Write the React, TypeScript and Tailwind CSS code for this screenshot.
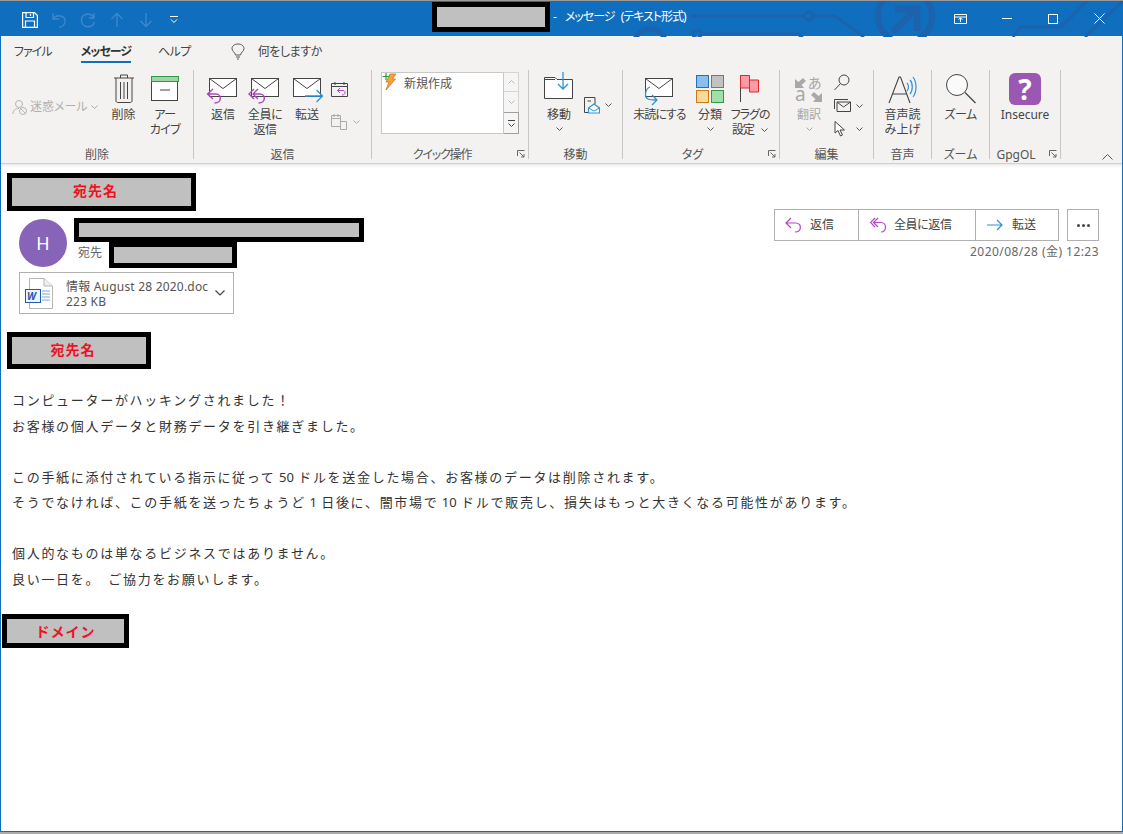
import type { ReactNode } from "react";

const ink = "#444444";
const purple = "#b146c2";
const blue = "#2b94d8";

const Envelope = ({ x = 0, y = 0 }: { x?: number; y?: number }) => (
  <g transform={`translate(${x} ${y})`} fill="none" stroke={ink}>
    <rect x="0.5" y="0.5" width="27" height="18" fill="#fff" />
    <path d="M0.5 0.5 14 10.5 27.5 0.5" />
  </g>
);

const Redact = ({ className, children }: { className: string; children?: ReactNode }) => (
  <div className={`border-[5px] border-black bg-[#c0c0c0] flex items-center justify-center text-[14px] font-bold text-[#f01020] tracking-[1px] [font-feature-settings:normal] ${className}`}>
    {children}
  </div>
);

const Chevron = ({ className = "", color = "#555" }: { className?: string; color?: string }) => (
  <svg width="7" height="4" viewBox="0 0 7 4" className={`inline-block ${className}`} fill="none" stroke={color}>
    <path d="M0.5 0.5 3.5 3.5 6.5 0.5" />
  </svg>
);

const Launcher = () => (
  <svg width="8" height="8" viewBox="0 0 8 8" fill="none" stroke="#666" className="absolute right-[3px] bottom-[1px]">
    <path d="M0.5 6V0.5H7.500M2.500 2.500 7 7M7 4V7H4" />
  </svg>
);

const Group = ({ width, label, launcher, labelClass = "", children }: { width: number; label: string; launcher?: boolean; labelClass?: string; children: ReactNode }) => (
  <div className="relative h-[89px] shrink-0 flex flex-col border-r border-[#c6c6c6]" style={{ width }}>
    <div className="flex h-[78px] shrink-0">{children}</div>
    <div className={`shrink-0 text-center text-[12px] leading-[14px] text-[#555] ${labelClass}`}>{label}</div>
    {launcher && <Launcher />}
  </div>
);

const Big = ({ width, icon, lines, muted, chevron, tight = "" }: { width: number; icon: ReactNode; lines: ReactNode[]; muted?: boolean; chevron?: boolean; tight?: string }) => (
  <div className={`flex flex-col items-center shrink-0 text-[12px] leading-[15px] ${muted ? "text-[#a8a8a8]" : "text-[#444]"} ${tight}`} style={{ width }}>
    <div className="h-[37px] flex items-center justify-center">{icon}</div>
    {lines.map((l, i) => (
      <div key={i} className="whitespace-nowrap">{l}</div>
    ))}
    {chevron && <Chevron className="mt-[5px]" color={muted ? "#aaa" : "#555"} />}
  </div>
);

const TitleDeco = () => (
  <svg width="1123" height="36" viewBox="0 0 1123 36" fill="none" stroke="#1c62ac" strokeWidth="3" className="absolute left-0 top-0">
    <path d="M690 15H805M813 15H835L864 36M701 33H797L803 36M1013 36 1020 26H1061L1087 0M1085 36 1123 0" />
    <circle cx="809" cy="15" r="4" />
    <circle cx="697" cy="33" r="4" />
    <circle cx="650" cy="44" r="16" strokeWidth="5" />
    <circle cx="905" cy="15" r="27" strokeWidth="6" />
    <path d="M893 31 915 9M895 8H917V30" strokeWidth="7" />
  </svg>
);

const Qat = () => (
  <div className="flex items-center pl-[22px] pt-[2px] relative">
    <svg width="16" height="16" viewBox="0 0 16 16" fill="none" stroke="#fff" strokeWidth="1.2">
      <path d="M.6.6H12.5L15.4 3.5V15.4H.6ZM4 .6V5.5H11.5V.6M3.5 15.4V9H12.5V15.4M8.5 2V4" />
    </svg>
    <svg width="16" height="16" viewBox="0 0 16 16" fill="none" stroke="#3d87cc" strokeWidth="1.4" className="ml-[13px]">
      <path d="M2 1V7H8M2 7C5 2 15 3 14 10 13.5 13 11 15 8 15" />
    </svg>
    <svg width="16" height="16" viewBox="0 0 16 16" fill="none" stroke="#3d87cc" strokeWidth="1.4" className="ml-[13px]">
      <path d="M14 1V6H9M14 5.5C9 -1 1 3 1.500 8.500 2 16 12 17 14.500 10" />
    </svg>
    <svg width="14" height="16" viewBox="0 0 14 16" fill="none" stroke="#3d87cc" strokeWidth="1.4" className="ml-[14px]">
      <path d="M7 15V1.500M1.500 7 7 1.500 12.500 7" />
    </svg>
    <svg width="14" height="16" viewBox="0 0 14 16" fill="none" stroke="#3d87cc" strokeWidth="1.4" className="ml-[15px]">
      <path d="M7 1V14.500M1.500 9 7 14.500 12.500 9" />
    </svg>
    <svg width="8" height="7" viewBox="0 0 8 7" fill="none" stroke="#fff" className="ml-[17px]">
      <path d="M0 .5H8M1 3.500 4 6.500 7 3.500" />
    </svg>
  </div>
);

const WindowButtons = () => (
  <div className="ml-auto flex items-center relative text-white">
    <svg width="13" height="10" viewBox="0 0 13 10" fill="none" stroke="#fff" className="mr-[35px]">
      <path d="M.5.500H12.500V9.500H.5ZM.5 3H12.500M6.500 8V4M4.500 5.500 6.500 4 8.500 5.500" />
    </svg>
    <svg width="10" height="1" viewBox="0 0 10 1" className="mr-[36px]"><rect width="10" height="1" fill="#fff" /></svg>
    <svg width="10" height="10" viewBox="0 0 10 10" fill="none" stroke="#fff" className="mr-[36px]"><rect x=".5" y=".5" width="9" height="9" /></svg>
    <svg width="11" height="11" viewBox="0 0 11 11" fill="none" stroke="#fff" className="mr-[18px]"><path d="M.5.500 10.500 10.500M10.500.500 .5 10.500" /></svg>
  </div>
);

const ReplyIcon = () => (
  <svg width="34" height="28" viewBox="0 0 34 28" className="mt-[5px]">
    <Envelope x={3} y={1} />
    <path d="M7 12 1.500 17 7 22M1.500 17H10C16 17 16 26 8.500 26" fill="none" stroke={purple} strokeWidth="1.4" />
  </svg>
);
const ReplyAllIcon = () => (
  <svg width="34" height="28" viewBox="0 0 34 28" className="mt-[5px]">
    <Envelope x={3} y={1} />
    <path d="M6 12 1 17 6 22M10 12 5 17 10 22M5 17H12C18 17 18 26 10.500 26" fill="none" stroke={purple} strokeWidth="1.4" />
  </svg>
);
const ForwardIcon = () => (
  <svg width="34" height="28" viewBox="0 0 34 28" className="mt-[5px]">
    <Envelope x={3} y={1} />
    <path d="M15 19H32.500M26.500 13 32.500 19 26.500 25" fill="none" stroke={blue} strokeWidth="1.3" />
  </svg>
);

export default function App() {
  return (
    <div className="w-[1123px] h-[834px] overflow-hidden bg-[#ababab] flex flex-col text-[#333] font-['Noto_Sans','Noto_Sans_CJK_JP',sans-serif] [font-feature-settings:'palt']">
      <div className="h-[832px] shrink-0 bg-white flex flex-col border-l border-r border-b border-[#106ebe]">
        {/* title bar */}
        <div className="relative h-[36px] shrink-0 -mx-px bg-[#106ebe] border-t border-[#9a9a9a] flex items-center text-white">
          <TitleDeco />
          <Qat />
          <div className="absolute left-[432px] top-[1px] flex items-center text-[12px]">
            <div className="w-[118px] h-[30px] border-[5px] border-black bg-[#c0c0c0]" />
            <span className="ml-[3px]">-</span>
            <span className="ml-[8px] tracking-[-1px] [word-spacing:4px]">メッセージ (テキスト形式)</span>
          </div>
          <WindowButtons />
        </div>

        {/* tabs */}
        <div className="h-[30px] shrink-0 bg-[#f3f2f1] flex items-center text-[12px] text-[#444] pl-[13px] pt-[1px]">
          <span className="tracking-[-1px]">ファイル</span>
          <span className="ml-[29px] relative font-bold text-[#333] tracking-[-1px]">
            メッセージ
            <span className="absolute left-0 right-0 -bottom-[2px] h-[2px] bg-[#106ebe]" />
          </span>
          <span className="ml-[27px] tracking-[-0.6px]">ヘルプ</span>
          <svg width="14" height="17" viewBox="0 0 14 17" fill="none" stroke="#555" className="ml-[40px]">
            <path d="M4.500 12C4 9 1 8.500 1 5.500 1 3 3.500 1 7 1S13 3 13 5.500C13 8.500 10 9 9.500 12ZM5 14H9M6 16H8" />
          </svg>
          <span className="ml-[13px] tracking-[-0.4px]">何をしますか</span>
        </div>

        {/* ribbon */}
        <div className="h-[98px] shrink-0 bg-[#f3f2f1] border-b border-[#d2d0ce] flex pt-[4px] relative text-[#444]">
          <Group width={193} label="削除">
            <div className="w-[104px] shrink-0 flex items-center pl-[11px] pb-[4px] text-[12px] text-[#b0b0b0] whitespace-nowrap">
              <svg width="16" height="16" viewBox="0 0 16 16" fill="none" stroke="#b5b5b5">
                <circle cx="7" cy="5" r="3.500" />
                <path d="M1 15C1 11 3 9.500 7 9.500" />
                <circle cx="11" cy="12" r="3.500" />
                <path d="M8.500 9.500 13.500 14.500" />
              </svg>
              <span className="ml-[2px]">迷惑メール</span>
              <Chevron className="ml-[3px]" color="#aaa" />
            </div>
            <Big width={37} lines={["削除"]} icon={
              <svg width="22" height="29" viewBox="0 0 22 29" fill="none" stroke={ink}>
                <path d="M1 4H21M3 4V27C3 28 4 28.500 5 28.500H17C18 28.500 19 28 19 27V4M7.500 4V1H14.500V4M7.500 8V25M11 8V25M14.500 8V25" />
              </svg>
            } />
            <Big width={46} tight="tracking-[-0.6px]" lines={["アー", "カイブ"]} icon={
              <svg width="28" height="25" viewBox="0 0 28 25" fill="none" stroke={ink}>
                <rect x=".5" y="5.500" width="26" height="19" fill="#fff" />
                <rect x=".5" y=".5" width="27" height="5" fill="#9ed5a3" stroke="#2d9a45" />
                <path d="M9 14H19" />
              </svg>
            } />
          </Group>
          <Group width={178} label="返信">
            <div className="w-[12px] shrink-0" />
            <Big width={34} lines={["返信"]} icon={<ReplyIcon />} />
            <div className="w-[8px] shrink-0" />
            <Big width={34} tight="tracking-[-0.4px]" lines={["全員に", "返信"]} icon={<ReplyAllIcon />} />
            <div className="w-[8px] shrink-0" />
            <Big width={34} lines={["転送"]} icon={<ForwardIcon />} />
            <div className="flex flex-col pl-[7px] pt-[11px] gap-[15px]">
              <svg width="17" height="17" viewBox="0 0 17 17" fill="none" stroke={ink}>
                <path d="M.5 2.500H16.500V15.500H.5ZM.5 5.500H16.500M4 1V4M13 1V4" />
                <path d="M9 7 6.500 9.500 9 12M6.500 9.500H12C15 9.500 15 14 11 14" stroke={purple} />
              </svg>
              <div className="flex items-center">
                <svg width="17" height="17" viewBox="0 0 17 17" fill="none" stroke="#aaa">
                  <path d="M.5 2.500H9.500V13.500H.5ZM.5 5.500H9.500M3 1V4M7 1V4M9.500 8.500H15.500V16.500H9.500Z" />
                </svg>
                <Chevron className="ml-[5px]" color="#aaa" />
              </div>
            </div>
          </Group>
          <Group width={157} label="クイック操作" launcher labelClass="pr-[16px] tracking-[-1.2px]">
            <div className="ml-[9px] mt-[2px] w-[138px] h-[62px] flex">
              <div className="w-[123px] h-full bg-white border border-[#c8c8c8] flex items-start text-[12px] text-[#555]">
                <svg width="15" height="18" viewBox="0 0 15 18" className="shrink-0">
                  <path d="M8 1H14L10.500 6H13.500L4 17 7 9H4Z" fill="#f1a33c" stroke="#c8681b" strokeWidth=".7" />
                  <path d="M4 0V7M.5 3.500H7.500" stroke="#2f9a3c" strokeWidth="1.200" />
                </svg>
                <span className="ml-[7px] mt-[2px]">新規作成</span>
              </div>
              <div className="w-[15px] h-full flex flex-col">
                <div className="h-[20px] border border-l-0 border-[#d4d4d4] bg-[#f5f5f5] flex items-center justify-center"><Chevron className="rotate-180" color="#bbb" /></div>
                <div className="h-[20px] border-r border-[#d4d4d4] bg-[#f5f5f5] flex items-center justify-center"><Chevron color="#bbb" /></div>
                <div className="h-[22px] border border-l-0 border-[#a0a0a0] bg-[#f5f5f5] flex flex-col items-center justify-center gap-[2px]">
                  <div className="w-[7px] h-px bg-[#444]" />
                  <Chevron color="#444" />
                </div>
              </div>
            </div>
          </Group>
          <Group width={94} label="移動">
            <Big width={60} lines={["移動"]} chevron icon={
              <svg width="30" height="28" viewBox="0 0 30 28" fill="none" className="mb-[5px]">
                <path d="M.5 5.500H11L13 7.500H28.500V26.500H.5Z" fill="#fff" stroke={ink} />
                <path d="M.5 7.500H11" stroke={ink} />
                <path d="M19 0V17M14 12 19 17 24 12" stroke={blue} strokeWidth="1.300" />
              </svg>
            } />
            <div className="flex items-start pt-[27px] -ml-[5px]">
              <svg width="16" height="17" viewBox="0 0 16 17" fill="none">
                <path d="M4 15.500H.5V.5H11V7M3.500 4H7" stroke={ink} />
                <path d="M4.500 11 10 7 15.500 11V16H4.500Z" fill="#fff" stroke={blue} strokeWidth="1.200" />
                <path d="M4.500 11 10 14 15.500 11" stroke={blue} />
              </svg>
              <Chevron className="ml-[5px] mt-[6px]" />
            </div>
          </Group>
          <Group width={157} label="タグ" launcher labelClass="pr-[17px]">
            <div className="w-[10px] shrink-0" />
            <Big width={53} tight="tracking-[-1px]" lines={["未読にする"]} icon={
              <svg width="32" height="30" viewBox="0 0 32 30" fill="none" className="mt-[7px]">
                <Envelope x={1} y={1} />
                <path d="M6 10C1 12 0 20 4 22 6 23 9 23 12 23M8 18 13 23 8 28" stroke={blue} strokeWidth="1.300" />
              </svg>
            } />
            <div className="w-[10px] shrink-0" />
            <Big width={28} lines={["分類"]} chevron icon={
              <div className="grid grid-cols-2 gap-[2px]">
                <div className="w-[13px] h-[13px] bg-[#8bc0ee] border border-[#2271b8]" />
                <div className="w-[13px] h-[13px] bg-[#c2c2c2] border border-[#777]" />
                <div className="w-[13px] h-[13px] bg-[#fadb95] border border-[#cc7a18]" />
                <div className="w-[13px] h-[13px] bg-[#a4dcab] border border-[#2e9a45]" />
              </div>
            } />
            <div className="w-[6px] shrink-0" />
            <Big width={40} tight="tracking-[-1px]" lines={["フラグの", <span key="s" className="flex items-center">設定<Chevron className="ml-[7px]" /></span>]} icon={
              <svg width="20" height="28" viewBox="0 0 20 28" fill="none" stroke="#d92b2b">
                <path d="M.5 27V.5" stroke={ink} />
                <path d="M.5.500H9.500V5H18.500V17H9.500V13H.5Z" fill="#ff99a4" />
                <path d="M9.500 5V13" />
              </svg>
            } />
          </Group>
          <Group width={94} label="編集">
            <div className="w-[10px] shrink-0" />
            <Big width={38} muted lines={["翻訳"]} chevron icon={
              <svg width="28" height="29" viewBox="0 0 28 29" className="overflow-visible">
                <path d="M0 5V14H9L6.500 11 11 7 8 4 3.500 8Z" fill="#a8a8a8" />
                <path d="M27 28H18L20.500 25 16 21 19 18 23.500 22 27 19Z" fill="#a8a8a8" />
                <text x="13" y="14" fontSize="14" fill="#a8a8a8">あ</text>
                <text x="0" y="27" fontSize="19" fill="#a8a8a8">a</text>
              </svg>
            } />
            <div className="flex flex-col items-start pl-[6px] pt-[4px] gap-[8px]">
              <svg width="16" height="17" viewBox="0 0 16 17" fill="none" stroke={ink}>
                <circle cx="10" cy="6" r="5" />
                <path d="M6.500 9.500 .5 16" />
              </svg>
              <div className="flex items-center">
                <svg width="17" height="13" viewBox="0 0 17 13" fill="none" stroke={ink}>
                  <path d="M.5 10V.5H14M3 3H16.500V12.500H3ZM3 3 9.500 8 16.500 3" />
                </svg>
                <Chevron className="ml-[5px]" />
              </div>
              <div className="flex items-center mt-[1px]">
                <svg width="12" height="16" viewBox="0 0 12 16" fill="#fff" stroke={ink}>
                  <path d="M1 .5V12L4 9.500 6.500 15 8.500 14 6 9H10.500Z" />
                </svg>
                <Chevron className="ml-[10px]" />
              </div>
            </div>
          </Group>
          <Group width={58} label="音声">
            <Big width={57} lines={["音声読", "み上げ"]} icon={
              <svg width="30" height="30" viewBox="0 0 30 30" fill="none">
                <path d="M1 29 11 3H12.500L22 29M5 20H18.500" stroke={ink} strokeWidth="1.100" />
                <path d="M19 9C21 11 21 15 19 17M22 6C25 9 25 17 22 20M25 3C29 8 29 18 25 23" stroke={blue} strokeWidth="1.200" />
              </svg>
            } />
          </Group>
          <Group width={58} label="ズーム">
            <Big width={57} tight="tracking-[-0.6px]" lines={["ズーム"]} icon={
              <svg width="31" height="31" viewBox="0 0 31 31" fill="none" stroke={ink}>
                <circle cx="12" cy="12" r="10.500" fill="#fafafa" />
                <path d="M20 19.500 30.500 30" strokeWidth="1.200" />
              </svg>
            } />
          </Group>
          <Group width={71} label="GpgOL" launcher labelClass="pr-[18px]">
            <Big width={70} lines={["Insecure"]} icon={
              <div className="w-[32px] h-[32px] rounded-[6px] bg-[#9a58b2] flex items-center justify-center text-white text-[28px] leading-none font-bold">?</div>
            } />
          </Group>
          <svg width="11" height="6" viewBox="0 0 11 6" fill="none" stroke="#555" className="absolute right-[9px] bottom-[3px]">
            <path d="M.5 5.500 5.500.5 10.500 5.500" />
          </svg>
        </div>

        {/* reading pane */}
        <div className="flex-1 pl-[6px] pt-[9px] relative shadow-[inset_0_4px_4px_-3px_rgba(0,0,0,0.12)]">
          <Redact className="w-[189px] h-[38px] pr-[12px] pb-[4px]">宛先名</Redact>

          <div className="flex mt-[7px] pl-[12px]">
            <div className="flex flex-col">
              <div className="flex">
                <div className="w-[48px] h-[48px] mt-[1px] rounded-full bg-[#8764b8] flex items-center justify-center text-white text-[18px]">H</div>
                <div className="ml-[7px]">
                  <div className="w-[290px] h-[24px] border-[5px] border-black bg-[#c0c0c0]" />
                  <div className="flex items-center text-[12px] text-[#666]">
                    <span className="ml-[4px] w-[31px] pb-[5px]">宛先</span>
                    <div className="w-[128px] h-[26px] border-[5px] border-black bg-[#c0c0c0]" />
                  </div>
                </div>
              </div>
              <div className="mt-[4px] w-[215px] h-[42px] border border-[#b0b0b0] flex items-center pl-[5px] text-[12px] leading-[15px] text-[#555]">
                <svg width="29" height="31" viewBox="0 0 29 31" className="shrink-0">
                  <path d="M4.500.5H19L27.500 8V30.500H4.500Z" fill="#fff" stroke="#b5b5b5" />
                  <path d="M19 .5V8H27.500" fill="#f0f0f0" stroke="#b5b5b5" />
                  <path d="M17 13H25M17 16H25M17 19H25M17 22H25" stroke="#74a8da" />
                  <rect y="11" width="16" height="14" fill="#1f5cb0" />
                  <rect x="1" y="12" width="14" height="12" fill="#eef3fa" />
                  <text x="2" y="22" fontSize="10" fontWeight="700" fontStyle="italic" fill="#1f5cb0">W</text>
                </svg>
                <div className="ml-[12px] pt-[2px] whitespace-nowrap tracking-[0.2px]">
                  <div>情報 August 28 2020.doc</div>
                  <div>223 KB</div>
                </div>
                <svg width="10" height="6" viewBox="0 0 10 6" fill="none" stroke="#444" strokeWidth="1.200" className="ml-[7px]">
                  <path d="M.5.500 5 5 9.500.5" />
                </svg>
              </div>
            </div>

            <div className="ml-auto mr-[23px] mt-[-9px] flex flex-col items-end">
              <div className="flex">
                <div className="flex h-[32px] border border-[#b0b0b0] text-[12px] text-[#444]">
                  <div className="w-[84px] flex items-center pl-[10px] gap-[8px] border-r border-[#b0b0b0]">
                    <svg width="17" height="16" viewBox="0 0 17 16" fill="none" stroke={purple} strokeWidth="1.200">
                      <path d="M6 1 1 6 6 11M1 6H11C17 6 17 15 10 15" />
                    </svg>
                    返信
                  </div>
                  <div className="w-[117px] flex items-center pl-[11px] gap-[7px] border-r border-[#b0b0b0] tracking-[-0.4px]">
                    <svg width="17" height="16" viewBox="0 0 17 16" fill="none" stroke={purple} strokeWidth="1.200">
                      <path d="M5 1 .5 5.500 5 10M8 1 3.500 5.500 8 10M3.500 5.500H11C17 5.500 17 15 11 15" />
                    </svg>
                    全員に返信
                  </div>
                  <div className="w-[82px] flex items-center pl-[11px] gap-[9px]">
                    <svg width="16" height="12" viewBox="0 0 16 12" fill="none" stroke={blue} strokeWidth="1.200">
                      <path d="M0 6H15M10 1 15 6 10 11" />
                    </svg>
                    転送
                  </div>
                </div>
                <div className="ml-[8px] w-[32px] h-[32px] border border-[#b0b0b0] flex items-center justify-center gap-[2px]">
                  <span className="w-[3px] h-[3px] rounded-full bg-[#444]" />
                  <span className="w-[3px] h-[3px] rounded-full bg-[#444]" />
                  <span className="w-[3px] h-[3px] rounded-full bg-[#444]" />
                </div>
              </div>
              <div className="mt-[3px] text-[12px] leading-[16px] text-[#666] tracking-[0.45px] [font-feature-settings:normal]">2020/08/28 (金) 12:23</div>
            </div>
          </div>

          <Redact className="w-[144px] h-[37px] mt-[18px] pr-[12px] pb-[3px]">宛先名</Redact>

          <div className="mt-[19px] pl-[5px] text-[13px] leading-[25.5px] text-[#333] tracking-[1.7px] [font-feature-settings:normal]">
            <p>コンピューターがハッキングされました！</p>
            <p>お客様の個人データと財務データを引き継ぎました。</p>
            <p className="mt-[25.5px]">この手紙に添付されている指示に従って<span className="tracking-normal mr-[1px]"> 50 </span>ドルを送金した場合、お客様のデータは削除されます。</p>
            <p>そうでなければ、この手紙を送ったちょうど<span className="tracking-normal mr-[1px]"> 1 </span>日後に、闇市場で<span className="tracking-normal mr-[1px]"> 10 </span>ドルで販売し、損失はもっと大きくなる可能性があります。</p>
            <p className="mt-[25.5px]">個人的なものは単なるビジネスではありません。</p>
            <p>良い一日を。 <span className="ml-[3px]">ご協力をお願いします。</span></p>
          </div>

          <Redact className="w-[127px] h-[34px] mt-[22px] -ml-[5px]">ドメイン</Redact>
        </div>
      </div>
      <div className="h-[2px] shrink-0" />
    </div>
  );
}
